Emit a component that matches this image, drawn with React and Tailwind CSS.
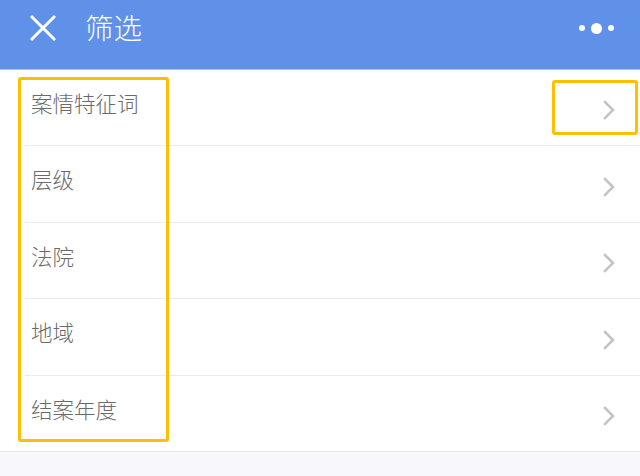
import React from "react";

const rows = [
  { label: "案情特征词", h: "h-[76px]" },
  { label: "层级", h: "h-[77px]" },
  { label: "法院", h: "h-[76px]" },
  { label: "地域", h: "h-[77px]" },
  { label: "结案年度", h: "h-[75px]", last: true },
];

function Chevron() {
  return (
    <svg width="14" height="22" viewBox="0 0 14 22" className="block">
      <polyline points="3,3 11,11 3,19" fill="none" stroke="#c4c4c4" strokeWidth="2.6" strokeLinecap="square" strokeLinejoin="miter" />
    </svg>
  );
}

export default function App() {
  return (
    <div
      className="relative w-[640px] h-[476px] overflow-hidden bg-[#f8f8fc]"
      style={{ fontFamily: '"Noto Sans CJK SC", "Noto Sans", sans-serif' }}
    >
      <div className="h-[69px] bg-[#5f91e8] flex items-center pb-[13px]">
        <svg width="28" height="28" viewBox="0 0 28 28" className="ml-[29px]">
          <path d="M2 2 L26 26 M26 2 L2 26" stroke="#fff" strokeWidth="3" fill="none" />
        </svg>
        <span className="ml-[28px] text-[28.5px] leading-none text-white font-light mt-[-2px]">筛选</span>
        <div className="ml-auto mr-[26px] flex items-center gap-[6px]">
          <span className="w-[6px] h-[6px] rounded-full bg-white" />
          <span className="w-[11px] h-[11px] rounded-full bg-white" />
          <span className="w-[6px] h-[6px] rounded-full bg-white" />
        </div>
      </div>
      <div className="h-[1px] bg-[#a9c3f1]" />
      <div className="bg-white border-b border-[#e6e6e6]">
        {rows.map((r) => (
          <div key={r.label} className="pl-[25px]">
            <div
              className={`${r.h} flex items-center pr-[24px] ${r.last ? "" : "border-b border-[#ececec]"}`}
            >
              <span className="ml-[6px] text-[21.5px] leading-none text-[#6a6a6a] font-light pb-[10px]">{r.label}</span>
              <span className="ml-auto pt-[5px]">
                <Chevron />
              </span>
            </div>
          </div>
        ))}
      </div>
      <div className="absolute left-[18px] top-[77px] w-[151px] h-[365px] border-[3px] border-[#fdbf00] rounded-[3px]" />
      <div className="absolute left-[552px] top-[80px] w-[86px] h-[55px] border-[3px] border-[#fdbf00] rounded-[3px]" />
    </div>
  );
}
